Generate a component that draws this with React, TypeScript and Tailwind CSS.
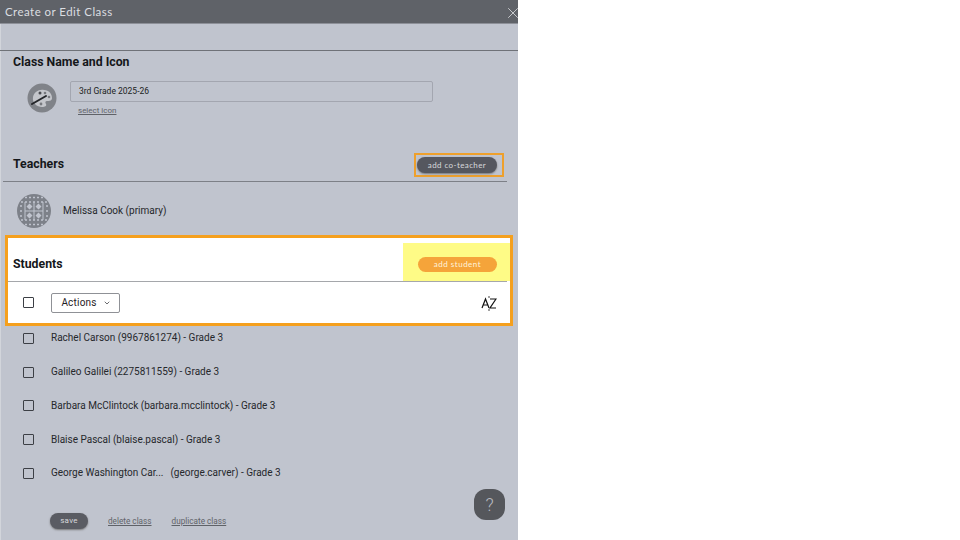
import { ChevronDown, X } from "lucide-react";

const students = [
  "Rachel Carson (9967861274) - Grade 3",
  "Galileo Galilei (2275811559) - Grade 3",
  "Barbara McClintock (barbara.mcclintock) - Grade 3",
  "Blaise Pascal (blaise.pascal) - Grade 3",
];

function Box() {
  return <span className="block h-[9px] w-[9px] shrink-0 box-content rounded-[1px] border border-[#3c3f45]" />;
}

function PaletteIcon() {
  return (
    <svg width="30" height="30" viewBox="0 0 30 30" className="ml-[27px] shrink-0">
      <circle cx="15" cy="15" r="14.5" fill="#808389" />
      <path d="M6 14c1-5 6-8 11-7 5 0 8 4 8 8 0 3-3 3-5 3-2 0-2 2-1 3 1 2-1 3-4 3-5 0-10-4-9-10z" fill="#c4c6cb" />
      <circle cx="13" cy="10" r="1.5" fill="#4b4d52" />
      <circle cx="18" cy="10" r="1.3" fill="#77797e" />
      <circle cx="22" cy="14" r="1.3" fill="#77797e" />
      <circle cx="14" cy="21" r="1.4" fill="#77797e" />
      <path d="M5 21l14-8" stroke="#24262a" strokeWidth="2" strokeLinecap="round" />
    </svg>
  );
}

function QuiltIcon() {
  return (
    <svg width="34" height="34" viewBox="0 0 34 34" className="shrink-0">
      <defs>
        <clipPath id="quilt">
          <circle cx="17" cy="17" r="17" />
        </clipPath>
      </defs>
      <g clipPath="url(#quilt)">
        <rect width="34" height="34" fill="#7d8189" />
        <path d="M0 3.5h34M0 8h34M0 26h34M0 30.5h34" stroke="#c0c4ce" strokeWidth="1.5" strokeDasharray="2 2" />
        <path d="M8 8v18M26 8v18M17 8v18M8 17h18" stroke="#c0c4ce" strokeWidth="1" />
        <path d="M12.5 9.5l3 3-3 3-3-3zM21.5 9.5l3 3-3 3-3-3zM12.5 18.5l3 3-3 3-3-3zM21.5 18.5l3 3-3 3-3-3z" fill="#c0c4ce" />
        <path d="M3 12h2M3 17h2M3 22h2M29 12h2M29 17h2M29 22h2" stroke="#c0c4ce" strokeWidth="1.5" />
      </g>
    </svg>
  );
}

export default function App() {
  return (
    <div className="h-[540px] w-[960px] overflow-hidden bg-white font-['Roboto',sans-serif]">
      <div className="relative flex h-[540px] w-[518px] flex-col bg-[#c0c4ce] shadow-[inset_1px_0_0_#d2d5db]">
        <header className="flex h-6 shrink-0 items-center justify-between border-b border-[#8d9098] bg-[#5f6268] pl-[5px] text-[#dcdee1]">
          <span className="font-['Lato',sans-serif] text-[11.5px] tracking-[0.45px]">Create or Edit Class</span>
          <X size={18} strokeWidth={1.1} className="-mr-[4px] mt-[3px]" />
        </header>

        <section className="mt-[26px] h-[99px] shrink-0 border-t border-[#6f7278] pl-[13px] pt-[4px]">
          <h2 className="text-[12.3px] font-bold leading-[15px] text-[#15171a]">Class Name and Icon</h2>
          <div className="mt-[11px] flex">
            <div className="-ml-[13px] pt-[2px]">
              <PaletteIcon />
            </div>
            <div className="ml-[13px]">
              <div className="flex h-[21px] w-[363px] items-center rounded-[2px] border border-[#a3a6b0] pl-2 text-[8.5px] text-[#1c1e22]">
                3rd Grade 2025-26
              </div>
              <a className="ml-2 mt-[3px] block text-[8px] leading-[11px] text-[#5f6268] underline">select icon</a>
            </div>
          </div>
        </section>

        <section className="ml-[3px] mr-[11px] flex h-[33px] shrink-0 items-center justify-between border-b border-[#7d8087] pl-[10px] pr-[3px]">
          <h2 className="mb-[2px] text-[12.3px] font-bold text-[#15171a]">Teachers</h2>
          <div className="flex h-6 w-[90px] shrink-0 items-center border-2 border-[#eea02c] pl-[1px]">
            <button className="flex h-[16px] w-[80px] items-center justify-center rounded-full bg-[#55575f] pb-[1px] font-['Lato',sans-serif] text-[8px] tracking-[0.4px] text-[#d8d9dc] shadow-[0_1px_2px_#777]">
              add co-teacher
            </button>
          </div>
        </section>

        <div className="flex h-[53px] shrink-0 items-center pt-[4px] pl-[17px]">
          <QuiltIcon />
          <span className="ml-3 text-[10px] text-[#26282c]">Melissa Cook (primary)</span>
        </div>

        <section className="ml-[5px] h-[91px] w-[508px] shrink-0 border-[3px] border-[#f5a01e] bg-white">
          <div className="flex h-[43px] items-stretch justify-between pt-[5px]">
            <h2 className="ml-[5px] self-center pt-[4px] text-[12.3px] font-bold text-[#15171a]">Students</h2>
            <div className="flex h-[38px] w-[107px] items-end justify-center bg-[#fefb86] pb-[4px] pl-[2px]">
              <button className="mb-[5px] flex h-[15px] w-[79px] items-center justify-center rounded-full bg-[#f5a43a] pb-[1px] font-['Lato',sans-serif] text-[8px] tracking-[0.5px] text-[#fff3dc]">
                add student
              </button>
            </div>
          </div>
          <div className="mr-[3px] flex h-[42px] items-center border-t border-[#a5a7ab] pl-[15px] pr-[13px]">
            <Box />
            <button className="ml-[17px] flex h-5 w-[69px] items-center justify-center gap-[6px] rounded-[2px] border border-[#8f9196] pl-[1px] text-[10px] tracking-[0.2px] text-[#1f2125]">
              Actions <ChevronDown size={8} strokeWidth={2} />
            </button>
            <svg width="16" height="16" viewBox="0 0 16 16" className="ml-auto -mr-[3px]">
              <path d="M1 13L4.5 4 8 13M2.2 10h4.6" fill="none" stroke="#111" strokeWidth="1.2" />
              <path d="M9 4h6l-6 9h6" fill="none" stroke="#111" strokeWidth="1.2" />
              <path d="M8 1v2M8 14v2" stroke="#111" strokeWidth="0.8" />
            </svg>
          </div>
        </section>

        <ul className="-mt-[4.5px] flex shrink-0 flex-col pl-[23px] text-[10px] text-[#26282c]">
          {students.map((s) => (
            <li key={s} className="flex h-[33.75px] items-center gap-[17px] leading-none">
              <Box />
              <span>{s}</span>
            </li>
          ))}
          <li className="flex h-[33.75px] items-center gap-[17px] leading-none">
            <Box />
            <span>George Washington Car...</span>
            <span className="-ml-[10px]">(george.carver) - Grade 3</span>
          </li>
        </ul>

        <footer className="mt-[22.5px] flex items-center pl-[50px] text-[8.2px] text-[#5f6268]">
          <button className="h-4 w-[38px] rounded-full bg-[#5a5c63] text-[8px] tracking-[0.3px] text-[#d8d9dc] shadow-[0_1px_2px_#777]">
            save
          </button>
          <a className="ml-[20px] underline">delete class</a>
          <a className="ml-[20px] underline">duplicate class</a>
        </footer>

        <button className="absolute left-[474px] top-[489px] flex h-[31px] w-[31px] items-center justify-center rounded-[12px] bg-[#55575c] text-[18px] font-light text-[#b8bac0]">
          ?
        </button>
      </div>
    </div>
  );
}
